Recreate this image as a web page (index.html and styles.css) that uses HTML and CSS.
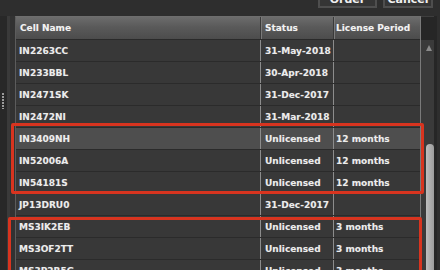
FILE: index.html
```html
<!DOCTYPE html>
<html>
<head>
<meta charset="utf-8">
<link rel="stylesheet" href="styles.css">
</head>
<body>
<div class="page">
  <div class="toolbar">
    <button class="btn btn-order">Order</button>
    <button class="btn btn-cancel">Cancel</button>
  </div>
  <div class="main">
    <div class="gutter"><div class="grip"></div></div>
    <div class="gap"></div>
    <div class="grid">
      <div class="row head">
        <div class="c c1">Cell Name</div>
        <div class="c c2">Status</div>
        <div class="c c3">License Period</div>
      </div>
      <div class="row"><div class="c c1">IN2263CC</div><div class="c c2">31-May-2018</div><div class="c c3"></div></div>
      <div class="row"><div class="c c1">IN233BBL</div><div class="c c2">30-Apr-2018</div><div class="c c3"></div></div>
      <div class="row"><div class="c c1">IN2471SK</div><div class="c c2">31-Dec-2017</div><div class="c c3"></div></div>
      <div class="row"><div class="c c1">IN2472NI</div><div class="c c2">31-Mar-2018</div><div class="c c3"></div></div>
      <div class="row sel"><div class="c c1">IN3409NH</div><div class="c c2">Unlicensed</div><div class="c c3">12 months</div></div>
      <div class="row"><div class="c c1">IN52006A</div><div class="c c2">Unlicensed</div><div class="c c3">12 months</div></div>
      <div class="row"><div class="c c1">IN54181S</div><div class="c c2">Unlicensed</div><div class="c c3">12 months</div></div>
      <div class="row"><div class="c c1">JP13DRU0</div><div class="c c2">31-Dec-2017</div><div class="c c3"></div></div>
      <div class="row"><div class="c c1">MS3IK2EB</div><div class="c c2">Unlicensed</div><div class="c c3">3 months</div></div>
      <div class="row"><div class="c c1">MS3OF2TT</div><div class="c c2">Unlicensed</div><div class="c c3">3 months</div></div>
      <div class="row"><div class="c c1">MS3P2R5G</div><div class="c c2">Unlicensed</div><div class="c c3">3 months</div></div>
    </div>
    <div class="scroll">
      <div class="scroll-head"></div>
      <div class="track">
        <svg class="arrow" width="8" height="8" viewBox="0 0 8 8"><path d="M4 1 L7 7 L1 7 Z" fill="#8a8a8a"/></svg>
        <div class="thumb"></div>
      </div>
    </div>
    <div class="edge"></div>
    <div class="mark mark1"></div>
    <div class="mark mark2"></div>
  </div>
</div>
</body>
</html>
```
FILE: styles.css
```css
html, body {
  margin: 0;
  padding: 0;
  background: #2e2e2e;
}
.page {
  width: 440px;
  height: 270px;
  overflow: hidden;
  font-family: "DejaVu Sans", Verdana, sans-serif;
  font-weight: bold;
  font-size: 9px;
  color: #ececec;
}
.toolbar {
  height: 16px;
  display: flex;
  justify-content: flex-end;
  align-items: flex-end;
  gap: 6px;
  padding-right: 7px;
  box-sizing: border-box;
  padding-bottom: 8px;
}
.btn {
  height: 22px;
  flex: none;
  box-sizing: border-box;
  background: #353535;
  border: 2px solid #4e4e4e;
  color: #f0f0f0;
  font-family: "DejaVu Sans", Verdana, sans-serif;
  font-weight: bold;
  font-size: 11px;
  padding: 6px 0 0 0;
  line-height: 12px;
  text-align: center;
}
.btn-order { width: 59px; }
.btn-cancel { width: 50px; }
.main {
  position: relative;
  display: flex;
  height: 254px;
}
.gutter {
  width: 7px;
  background: #282828;
  border-right: 3px solid #3a3a3a;
  position: relative;
}
.grip {
  position: absolute;
  left: 2px;
  top: 77px;
  width: 2px;
  height: 16px;
  background: repeating-linear-gradient(to bottom, #9a9a9a 0 2px, transparent 2px 3px);
}
.gap {
  width: 5px;
  background: #323232;
}
.grid {
  width: 404px;
  border-left: 1px solid #5c5c5c;
  border-top: 1px solid #6e6e6e;
  border-right: 1px solid #7a7a7a;
  background: #363636;
}
.row {
  display: grid;
  grid-template-columns: 244px 73px 87px;
  height: 22px;
  border-bottom: 1px solid #2b2b2b;
  box-sizing: border-box;
  background: #383838;
}
.row.sel {
  background: #4e4e4e;
}
.row.head {
  height: 23px;
  background: linear-gradient(to bottom, #6c6c6c 0%, #5a5a5a 45%, #4c4c4c 100%);
  border-bottom: 1px solid #2a2a2a;
  color: #f2f2f2;
}
.c {
  display: flex;
  align-items: center;
  padding-left: 4px;
  white-space: nowrap;
  overflow: hidden;
  text-shadow: 0 0 1px rgba(255,255,255,0.25);
}
.c1 { padding-left: 3px; }
.c2, .c3 {
  border-left: 1px solid #8c8c8c;
}
.c3 { padding-left: 2px; }
.head .c2, .head .c3 {
  border-left: 1px solid #3a3a3a;
  box-shadow: inset 1px 0 0 #7a7a7a;
}
.head .c1 { padding-left: 4px; }
.scroll {
  width: 13px;
  display: flex;
  flex-direction: column;
}
.scroll-head {
  height: 24px;
  background: #262626;
  border-top: 1px solid #3e3e3e;
  box-sizing: border-box;
}
.track {
  flex: 1;
  background: #3a3a3a;
  position: relative;
}
.arrow {
  position: absolute;
  left: 4px;
  top: 4px;
}
.thumb {
  position: absolute;
  left: 5px;
  width: 8px;
  top: 104px;
  bottom: -10px;
  background: linear-gradient(to right, #bdbdbd, #9c9c9c);
  border-radius: 4px 4px 0 0;
}
.edge {
  width: 3px;
  background: #262626;
}
.mark {
  position: absolute;
  border: 3px solid #d8341f;
  border-radius: 2px;
  box-sizing: border-box;
}
.mark1 {
  left: 11px;
  top: 107px;
  width: 413px;
  height: 71px;
}
.mark2 {
  left: 8px;
  top: 201px;
  width: 414px;
  height: 80px;
}
```
